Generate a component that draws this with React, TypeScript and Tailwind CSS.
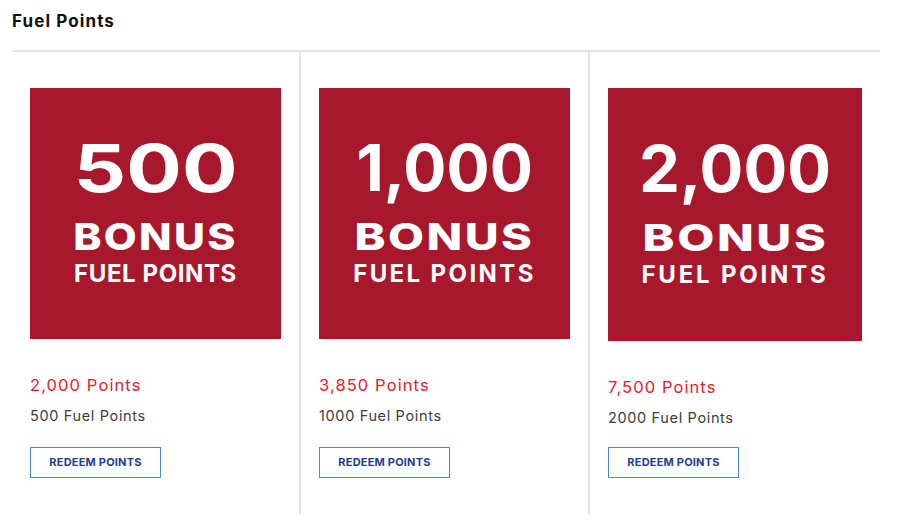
type Offer = {
  amount: string;
  cost: string;
  label: string;
  tile: string;
  num: string;
  bonus: string;
  fuel: string;
  btn: string;
  border: boolean;
};

const offers: Offer[] = [
  {
    amount: "500",
    cost: "2,000 Points",
    label: "500 Fuel Points",
    tile: "w-[251px] h-[251px]",
    num: "text-[66px] scale-x-[1.25]",
    bonus: "text-[37px] tracking-[2px] scale-x-[1.15]",
    fuel: "text-[24px] tracking-[0.6px]",
    btn: "mt-[19px]",
    border: true,
  },
  {
    amount: "1,000",
    cost: "3,850 Points",
    label: "1000 Fuel Points",
    tile: "w-[251px] h-[251px]",
    num: "text-[64px]",
    bonus: "text-[37px] tracking-[2px] scale-x-[1.26]",
    fuel: "text-[24px] tracking-[2.4px]",
    btn: "mt-[19px]",
    border: true,
  },
  {
    amount: "2,000",
    cost: "7,500 Points",
    label: "2000 Fuel Points",
    tile: "w-[254px] h-[253px]",
    num: "text-[65px]",
    bonus: "text-[37px] tracking-[2px] scale-x-[1.3]",
    fuel: "text-[24px] tracking-[2.8px]",
    btn: "mt-[17px]",
    border: false,
  },
];

function BonusTile({ o }: { o: Offer }) {
  return (
    <div className={`${o.tile} bg-[#a8182c] flex flex-col items-center justify-center pb-[6px] text-white font-['Inter',sans-serif] font-bold`}>
      <span className={`${o.num} leading-[66px]`}>{o.amount}</span>
      <span className={`${o.bonus} leading-[37px] mt-[17px] font-extrabold`}>BONUS</span>
      <span className={`${o.fuel} leading-[24px] mt-[7px]`}>FUEL POINTS</span>
    </div>
  );
}

export default function App() {
  return (
    <div className="w-[904px] h-[522px] bg-white px-3 pt-[11px] font-['Inter',sans-serif] overflow-hidden">
      <div className="w-[868px]">
        {/* Title */}
        <div className="border-b-2 border-[#e4e4e4] pb-[19px]">
          <h2 className="text-[17px] leading-[20px] font-bold text-[#111] tracking-[1.1px]">Fuel Points</h2>
        </div>

        {/* Offers */}
        <div className="grid grid-cols-[289px_289px_290px]">
          {offers.map((o) => (
            <div
              key={o.amount}
              className={`h-[462px] pl-[18px] pt-[36px] ${o.border ? "border-r-2 border-[#e4e4e4]" : ""}`}
            >
              <BonusTile o={o} />
              <div className="mt-[34px] text-[16.5px] leading-[24px] text-[#e41b2b] tracking-[1.1px]">{o.cost}</div>
              <div className="mt-[7px] text-[14.5px] leading-[24px] text-[#3c3c3c] tracking-[0.65px]">{o.label}</div>
              <button className={`${o.btn} w-[131px] h-[31px] border border-[#4a8ad8] text-[11px] font-bold text-[#1d3f8f] tracking-[0.2px]`}>
                REDEEM POINTS
              </button>
            </div>
          ))}
        </div>
      </div>
    </div>
  );
}
